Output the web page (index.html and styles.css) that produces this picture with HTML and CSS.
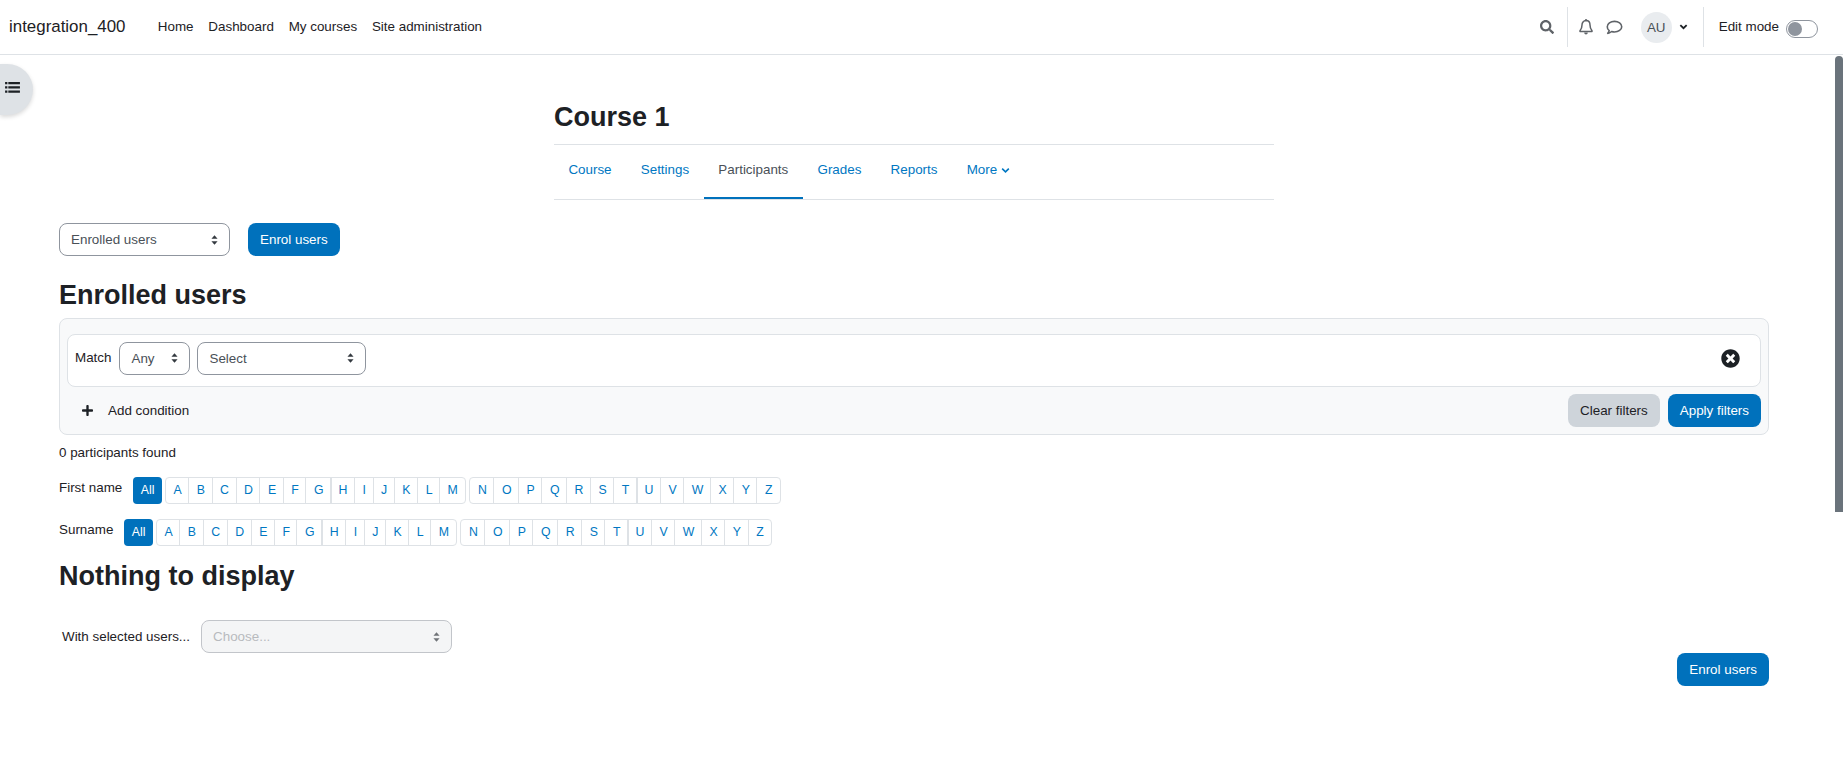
FILE: index.html
```html
<!DOCTYPE html>
<html>
<head>
    <title>Course 1: Participants</title>
    <link rel="stylesheet" href="styles.css">
</head>
<body>

    <nav class="navbar">
        <a class="brand">integration_400</a>
        <a class="nav-link">Home</a>
        <a class="nav-link">Dashboard</a>
        <a class="nav-link">My courses</a>
        <a class="nav-link">Site administration</a>

        <div class="nav-right">
            <svg class="icon-search" viewBox="0 0 512 512"><path fill="currentColor" d="M505 442.7L405.3 343c-4.5-4.5-10.6-7-17-7H372c27.6-35.3 44-79.7 44-128C416 93.1 322.9 0 208 0S0 93.1 0 208s93.1 208 208 208c48.3 0 92.7-16.4 128-44v16.3c0 6.4 2.5 12.5 7 17l99.7 99.7c9.4 9.4 24.6 9.4 33.9 0l28.3-28.3c9.4-9.4 9.4-24.6.1-34zM208 336c-70.7 0-128-57.2-128-128 0-70.7 57.2-128 128-128 70.7 0 128 57.2 128 128 0 70.7-57.2 128-128 128z"/></svg>
            <span class="nav-divider"></span>
            <svg class="icon-bell" viewBox="0 0 16 16"><path fill="none" stroke="currentColor" stroke-width="1.5" stroke-linejoin="round" d="M8 1.6c-2.6 0-4 2-4 4.4 0 3-.8 4.4-2 5.8v.7h12v-.7c-1.200-1.400-2-2.800-2-5.800 0-2.400-1.400-4.400-4-4.400z"/><path fill="currentColor" d="M6.200 13.500h3.600c0 1.200-.8 2-1.800 2s-1.800-.8-1.800-2zM7 .3h2v2H7z"/></svg>
            <svg class="icon-chat" viewBox="0 0 16 14"><path fill="none" stroke="currentColor" stroke-width="1.500" stroke-linejoin="round" d="M8 1.200c3.700 0 6.800 2.200 6.800 5s-3.100 5-6.800 5c-1 0-1.900-.15-2.700-.45C4.200 11.700 3 12.500 1.600 12.500c.8-.8 1.300-1.700 1.400-2.500C1.900 9.100 1.200 7.700 1.200 6.200c0-2.800 3.100-5 6.800-5z"/></svg>
            <span class="avatar">AU</span>
            <svg class="icon-caret" viewBox="0 0 10 8"><path fill="none" stroke="currentColor" stroke-width="2" d="M1.500 1.800L5 5.300l3.500-3.500"/></svg>
            <span class="nav-divider last"></span>
            <span class="edit-label">Edit mode</span>
            <span class="toggle"><span class="toggle-knob"></span></span>
        </div>
    </nav>

    <div class="drawer-toggle">
        <svg viewBox="0 0 16 14"><path fill="currentColor" d="M0 1h2.500v2.400H0zM3.500 1H16v2.400H3.500zM0 5.600h2.500V8H0zM3.500 5.600H16V8H3.500zM0 10.200h2.500v2.400H0zM3.500 10.200H16v2.400H3.500z"/></svg>
    </div>
    <div class="scrollbar"></div>

    <div class="course-head">
        <h1>Course 1</h1>
        <ul class="tabs">
            <li><a>Course</a></li>
            <li><a>Settings</a></li>
            <li class="active"><a>Participants</a></li>
            <li><a>Grades</a></li>
            <li><a>Reports</a></li>
            <li><a>More <svg class="icon-more" viewBox="0 0 10 8"><path fill="none" stroke="currentColor" stroke-width="1.800" d="M1.200 1.800L5 5.600l3.800-3.800"/></svg></a></li>
        </ul>
    </div>

    <main class="content">
        <div class="top-actions">
            <select class="select select-enrolled"><option>Enrolled users</option></select>
            <button class="button">Enrol users</button>
        </div>

        <h2>Enrolled users</h2>

        <div class="filters">
            <div class="filter-row">
                <span class="match-label">Match</span>
                <select class="select select-any"><option>Any</option></select>
                <select class="select select-type"><option>Select</option></select>
                <svg class="icon-remove" viewBox="0 0 512 512"><path fill="currentColor" d="M256 8C119 8 8 119 8 256s111 248 248 248 248-111 248-248S393 8 256 8zm121.600 313.100c4.700 4.700 4.700 12.300 0 17L338 377.600c-4.700 4.700-12.300 4.700-17 0L256 312l-65.100 65.600c-4.700 4.700-12.300 4.700-17 0L134.400 338c-4.700-4.700-4.700-12.300 0-17l65.600-65-65.600-65.100c-4.700-4.700-4.700-12.300 0-17l39.600-39.600c4.700-4.700 12.300-4.700 17 0l65 65.700 65.100-65.600c4.700-4.700 12.300-4.700 17 0l39.600 39.600c4.700 4.700 4.700 12.300 0 17L312 256l65.600 65.100z"/></svg>
            </div>
            <div class="filter-actions">
                <a class="add-condition">
                    <svg class="icon-plus" viewBox="0 0 448 512"><path fill="currentColor" d="M416 208H272V64c0-17.670-14.330-32-32-32h-32c-17.670 0-32 14.330-32 32v144H32c-17.670 0-32 14.330-32 32v32c0 17.670 14.330 32 32 32h144v144c0 17.670 14.330 32 32 32h32c17.670 0 32-14.330 32-32V304h144c17.670 0 32-14.330 32-32v-32c0-17.670-14.330-32-32-32z"/></svg>
                    Add condition
                </a>
                <button class="button button-grey">Clear filters</button>
                <button class="button">Apply filters</button>
            </div>
        </div>

        <p class="found">0 participants found</p>

        <div class="initials initials-first">
            <span class="initials-label">First name</span>
            <a class="all">All</a>
            <div class="letters"><a>A</a><a>B</a><a>C</a><a>D</a><a>E</a><a>F</a><a>G</a><a>H</a><a>I</a><a>J</a><a>K</a><a>L</a><a>M</a></div>
            <div class="letters"><a>N</a><a>O</a><a>P</a><a>Q</a><a>R</a><a>S</a><a>T</a><a>U</a><a>V</a><a>W</a><a>X</a><a>Y</a><a>Z</a></div>
        </div>
        <div class="initials">
            <span class="initials-label">Surname</span>
            <a class="all">All</a>
            <div class="letters"><a>A</a><a>B</a><a>C</a><a>D</a><a>E</a><a>F</a><a>G</a><a>H</a><a>I</a><a>J</a><a>K</a><a>L</a><a>M</a></div>
            <div class="letters"><a>N</a><a>O</a><a>P</a><a>Q</a><a>R</a><a>S</a><a>T</a><a>U</a><a>V</a><a>W</a><a>X</a><a>Y</a><a>Z</a></div>
        </div>

        <h2 class="nothing">Nothing to display</h2>

        <div class="bulk">
            <label>With selected users...</label>
            <select class="select select-bulk" disabled><option>Choose...</option></select>
        </div>

        <div class="bottom-actions">
            <button class="button">Enrol users</button>
        </div>
    </main>

</body>
</html>
```

FILE: styles.css
```css
html {
    overflow: hidden;
}
body {
    font-family: "Liberation Sans", Arial, sans-serif;
    font-size: 13.4px;
    line-height: 1.5;
    color: #1d2125;
    margin: 0;
    height: 758px;
    overflow: hidden;
    background-color: #fff;
}
a {
    text-decoration: none;
}

/* Top bar */
.navbar {
    display: flex;
    align-items: center;
    height: 54px;
    border-bottom: 1px solid #dee2e6;
    padding: 0 25px 0 9px;
}
.brand {
    font-size: 16.9px;
    margin-right: 25px;
}
.nav-link {
    padding: 0 7.4px;
}
.nav-right {
    display: flex;
    align-items: center;
    margin-left: auto;
    height: 40px;
    color: #5f6368;
}
.icon-search {
    width: 14px;
    height: 14px;
    margin-right: 13px;
}
.nav-divider {
    width: 1px;
    height: 40px;
    background-color: #dee2e6;
}
.nav-divider.last {
    margin-right: 15px;
}
.icon-bell {
    width: 16px;
    height: 16px;
    margin-left: 10px;
}
.icon-chat {
    width: 17px;
    height: 15px;
    margin-left: 12px;
}
.avatar {
    width: 31px;
    height: 31px;
    border-radius: 50%;
    background-color: #e9ecef;
    color: #495057;
    text-align: center;
    line-height: 31px;
    margin-left: 18px;
}
.icon-caret {
    width: 9px;
    height: 8px;
    color: #1d2125;
    margin: 0 15px 0 7px;
}
.edit-label {
    color: #1d2125;
    margin-right: 7px;
}
.toggle {
    display: block;
    width: 32px;
    height: 18px;
    box-sizing: border-box;
    border: 1px solid #8f959e;
    border-radius: 9px;
    background-color: #fff;
    padding: 1px;
    margin-top: 3px;
}
.toggle-knob {
    display: block;
    width: 14px;
    height: 14px;
    border-radius: 50%;
    background-color: #8f959e;
}

/* Things floating over the page */
.drawer-toggle {
    position: absolute;
    left: 0;
    top: 64px;
    width: 33px;
    height: 51px;
    border-radius: 0 26px 26px 0;
    background-color: #dee2e6;
    box-shadow: 0 2px 4px rgba(0, 0, 0, 0.15);
    color: #1d2125;
}
.drawer-toggle svg {
    position: absolute;
    left: 5px;
    top: 17px;
    width: 15px;
    height: 13px;
}
.scrollbar {
    position: absolute;
    right: 0;
    top: 56px;
    width: 8px;
    height: 456px;
    border-radius: 4px 4px 0 0;
    background-color: #6a737b;
}

/* Course header */
.course-head {
    width: 720px;
    margin-left: 554px;
}
h1 {
    font-size: 27px;
    line-height: 1.2;
    font-weight: 700;
    margin: 0;
    padding: 46px 0 11px;
    border-bottom: 1px solid #dee2e6;
}
.tabs {
    display: flex;
    list-style: none;
    margin: 0;
    padding: 0;
    height: 54px;
    border-bottom: 1px solid #dee2e6;
}
.tabs li {
    box-sizing: border-box;
    height: 54px;
    padding: 15px 14.6px 0;
}
.tabs li:first-child {
    padding-left: 14.4px;
}
.tabs a {
    color: #0077c2;
}
.tabs .active {
    border-bottom: 2px solid #0071bc;
}
.tabs .active a {
    color: #495057;
}
.icon-more {
    width: 9px;
    height: 7px;
}

/* Main column */
.content {
    padding: 23px 74px 0 59px;
}
.top-actions {
    display: flex;
    gap: 18px;
}
.select {
    appearance: none;
    box-sizing: border-box;
    height: 33px;
    font-family: inherit;
    font-size: 13.4px;
    color: #495057;
    background-color: #fff;
    background-image: url("data:image/svg+xml,%3Csvg xmlns='http://www.w3.org/2000/svg' viewBox='0 0 8 11'%3E%3Cpath fill='%23343a40' d='M4 0l3.500 4h-7zM4 11L.5 7h7z'/%3E%3C/svg%3E");
    background-repeat: no-repeat;
    background-position: right 11px center;
    background-size: 7px 10px;
    border: 1px solid #8f959e;
    border-radius: 8px;
    padding: 0 24px 0 11px;
}
.select-enrolled {
    width: 171px;
}
.button {
    box-sizing: border-box;
    height: 33px;
    font-family: inherit;
    font-size: 13.4px;
    color: #fff;
    background-color: #0071bc;
    border: none;
    border-radius: 8px;
    padding: 0 12px;
}
.button-grey {
    background-color: #ced4da;
    color: #1d2125;
}
h2 {
    font-size: 27px;
    line-height: 1.2;
    font-weight: 700;
    margin: 23px 0 6px;
}

/* Filter box */
.filters {
    box-sizing: border-box;
    height: 117px;
    background-color: #f8f9fa;
    border: 1px solid #dee2e6;
    border-radius: 8px;
    padding: 15px 7px 0;
}
.filter-row {
    display: flex;
    align-items: center;
    box-sizing: border-box;
    height: 53px;
    background-color: #fff;
    border: 1px solid #dee2e6;
    border-radius: 8px;
    padding: 0 7px 4px;
}
.match-label {
    margin-right: 8px;
}
.select-any {
    width: 71px;
    margin-right: 7px;
}
.select-type {
    width: 169px;
}
.icon-remove {
    width: 19px;
    height: 19px;
    margin-left: auto;
    margin-right: 13px;
}
.filter-actions {
    display: flex;
    align-items: center;
    gap: 8px;
    margin-top: 7px;
}
.add-condition {
    display: flex;
    align-items: center;
    margin-right: auto;
    padding-left: 15px;
    padding-top: 1px;
}
.icon-plus {
    width: 11px;
    height: 13px;
    margin-right: 15px;
}

.found {
    margin: 7px 0 0;
    line-height: 21px;
}

/* Initials bars */
.initials {
    display: flex;
    height: 27px;
    margin-top: 15px;
    font-size: 12.3px;
}
.initials-first {
    margin-top: 14px;
}
.initials-label {
    font-size: 13.4px;
    line-height: 21px;
    margin-right: 11px;
}
.all {
    box-sizing: border-box;
    height: 27px;
    line-height: 26px;
    padding: 0 7.5px;
    margin-right: 3px;
    color: #fff;
    background-color: #0071bc;
    border-radius: 4px;
}
.letters {
    display: flex;
    height: 27px;
    margin-right: 3px;
    box-sizing: border-box;
    border: 1px solid #dee2e6;
    border-radius: 4px;
}
.letters a {
    padding: 0 7.55px;
    line-height: 25px;
    color: #0077c2;
    border-left: 1px solid #dee2e6;
    margin-left: -1px;
}
.letters a:first-child {
    border-left: none;
    margin-left: 0;
}
.letters a:nth-child(8) {
    border-left-width: 2px;
    padding-left: 6.55px;
}

.nothing {
    margin: 14px 0 0;
}

.bulk {
    display: flex;
    align-items: center;
    margin-top: 28px;
    padding-left: 3px;
}
.bulk label {
    margin-right: 11px;
}
.select-bulk {
    width: 251px;
    color: #9a9ea3;
    background-color: #f0f1f3;
    border-color: #a9adb4;
}
.bottom-actions {
    display: flex;
    justify-content: flex-end;
}
```
